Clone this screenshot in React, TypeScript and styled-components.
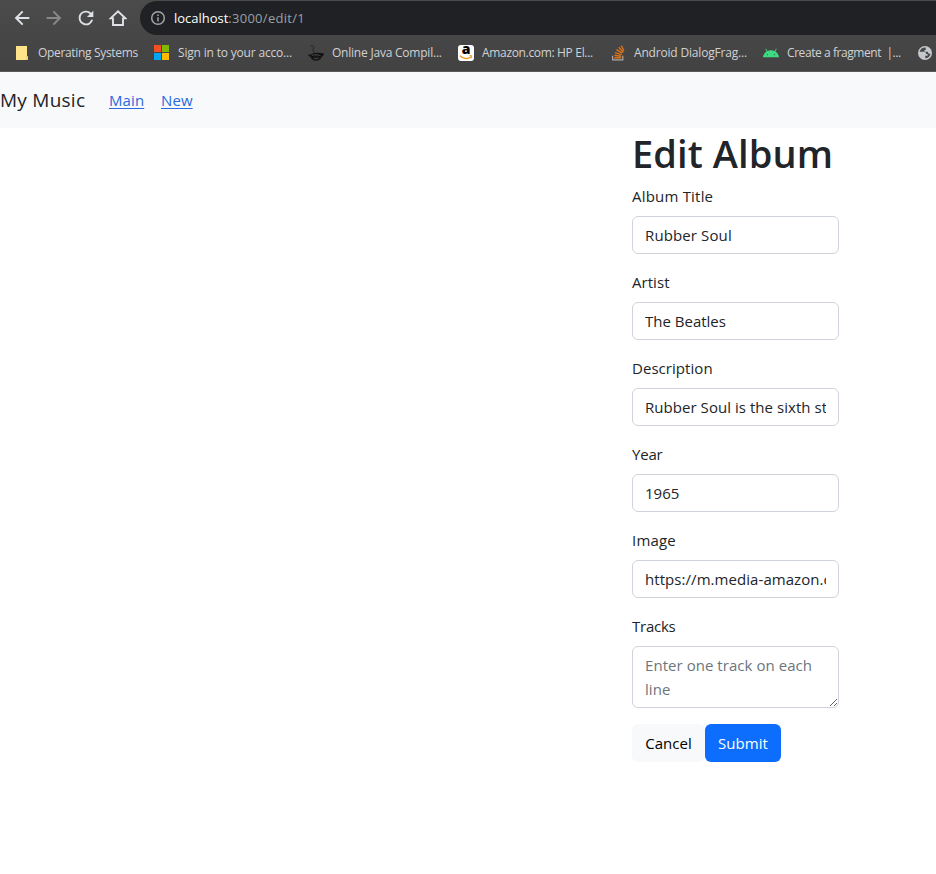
import React from "react";
import styled, { createGlobalStyle } from "styled-components";

const GlobalStyle = createGlobalStyle`
  *, *::before, *::after { box-sizing: border-box; }
  html, body { height: 100%; overflow: hidden; }
  body {
    margin: 0;
    background: #fff;
    color: #212529;
    font-family: "Segoe UI", "Open Sans", "Noto Sans", sans-serif;
    font-size: 15px;
    font-weight: 400;
    line-height: 24px;
  }
`;

const Chrome = styled.header`
  height: 72px;
  padding-top: 1px;
  background: linear-gradient(#4b4b4b, #424242);
  border-bottom: 1px solid #5a5a5a;
  overflow: hidden;
`;

const Toolbar = styled.div`
  display: flex;
  align-items: center;
  height: 34px;
  padding-left: 11px;
`;

const NavIcon = styled.span<{ $dim?: boolean }>`
  display: flex;
  flex: none;
  justify-content: center;
  width: 22px;
  margin-right: 10px;
  color: ${(p) => (p.$dim ? "#87888a" : "#dee1e6")};
`;

const AddressBar = styled.div`
  display: flex;
  flex: 1;
  align-items: center;
  height: 34px;
  margin-left: 1px;
  padding-left: 10px;
  border-radius: 17px 0 0 17px;
  background: #202124;
  color: #9aa0a6;
  font-size: 13px;
`;

const Url = styled.span`
  margin-left: 8px;
  letter-spacing: 0.28px;
`;

const Host = styled.span`
  color: #fff;
  letter-spacing: -0.02px;
`;

const Bookmarks = styled.div`
  display: flex;
  align-items: center;
  height: 36px;
  padding-left: 14px;
`;

const Bookmark = styled.div<{ $width: number }>`
  display: flex;
  flex: none;
  align-items: center;
  gap: 8px;
  width: ${(p) => p.$width}px;
  color: #d0d2d5;
  font-size: 12px;
  white-space: pre;
  svg { flex: none; }
`;

const BookmarkLabel = styled.span<{ $tracking: number }>`
  letter-spacing: ${(p) => p.$tracking}px;
`;

const Navbar = styled.nav`
  display: flex;
  align-items: center;
  height: 56px;
  background: #f8f9fa;
`;

const Brand = styled.span`
  width: 109px;
  font-size: 19px;
  line-height: 30px;
  letter-spacing: 0.25px;
`;

const NavLink = styled.a`
  width: 52px;
  color: #2a6ade;
  letter-spacing: 0.1px;
  text-decoration: underline;
  text-underline-offset: 2px;
`;

const Form = styled.form`
  width: 207px;
  margin-left: 632px;
`;

const Title = styled.h1`
  margin: 0 0 6px;
  font-size: 38px;
  font-weight: 600;
  line-height: 50px;
  letter-spacing: 0.1px;
  white-space: nowrap;
`;

const Field = styled.div`
  display: flex;
  flex-direction: column;
  gap: 8px;
  margin-bottom: 16px;
`;

const Label = styled.label<{ $tracking: number }>`
  line-height: 24px;
  letter-spacing: ${(p) => p.$tracking}px;
`;

const Input = styled.input<{ $tracking: number }>`
  width: 100%;
  height: 38px;
  padding: 6px 12px;
  border: 1px solid #ced4da;
  border-radius: 6px;
  outline: none;
  background: #fff;
  color: #212529;
  font: inherit;
  letter-spacing: ${(p) => p.$tracking}px;
`;

const TextArea = styled.textarea`
  display: block;
  width: 100%;
  height: 62px;
  padding: 6px 12px;
  border: 1px solid #ced4da;
  border-radius: 6px;
  outline: none;
  font: inherit;
  letter-spacing: 0.05px;
  overflow: hidden;
  resize: vertical;
  &::placeholder { color: #6c757d; opacity: 1; }
`;

const Actions = styled.div`
  display: flex;
`;

const Button = styled.button<{ $primary?: boolean }>`
  width: ${(p) => (p.$primary ? 76 : 73)}px;
  height: 38px;
  padding: 0;
  border: 0;
  border-radius: 6px;
  background: ${(p) => (p.$primary ? "#0d6efd" : "#f8f9fa")};
  color: ${(p) => (p.$primary ? "#fff" : "#000")};
  font: inherit;
  letter-spacing: 0.05px;
`;

const BackIcon = () => (
  <svg width="22" height="22" viewBox="0 0 24 24" fill="currentColor">
    <path d="M20 10.8H8.2l5.3-5.3L12 4l-8 8 8 8 1.5-1.5-5.3-5.3H20z" />
  </svg>
);

const ForwardIcon = () => (
  <svg width="22" height="22" viewBox="0 0 24 24" fill="currentColor">
    <path d="M4 10.8h11.8l-5.3-5.3L12 4l8 8-8 8-1.5-1.5 5.3-5.3H4z" />
  </svg>
);

const ReloadIcon = () => (
  <svg width="22" height="22" viewBox="0 0 24 24" fill="currentColor">
    <path d="M17.65 6.35A7.96 7.96 0 0 0 12 4a8 8 0 1 0 7.73 10h-2.2A5.9 5.9 0 1 1 12 6.1c1.6 0 3.1.7 4.1 1.8L13 11h7V4z" />
  </svg>
);

const HomeIcon = () => (
  <svg width="18" height="18" viewBox="0 0 18 18" fill="none" stroke="currentColor" strokeWidth="1.9">
    <path d="M1.6 9.4 9 2.4l7.4 7H14V16H4V9.4z" />
  </svg>
);

const InfoIcon = () => (
  <svg width="16" height="16" viewBox="0 0 16 16" fill="none" stroke="#a0a4a9" strokeWidth="1.5">
    <circle cx="8" cy="8" r="6.3" />
    <path d="M8 7.2v4.2M8 4.4v1.6" />
  </svg>
);

const FolderIcon = () => (
  <svg width="16" height="16" viewBox="0 0 16 16">
    <path fill="#ffe38b" d="M2 1h11v10.5h1V15H2z" />
    <path fill="#e9c85d" d="M12 11h2v4h-2z" />
    <path fill="#ffe9a2" d="M12.5 12h1v2h-1z" />
  </svg>
);

const MicrosoftIcon = () => (
  <svg width="16" height="16" viewBox="0 0 16 16">
    <path fill="#f25022" d="M0 0h7v7H0z" />
    <path fill="#7fba00" d="M8 0h7v7H8z" />
    <path fill="#00a4ef" d="M0 8h7v7H0z" />
    <path fill="#ffb900" d="M8 8h7v7H8z" />
  </svg>
);

const JavaCupIcon = () => (
  <svg width="16" height="16" viewBox="0 0 16 16">
    <path fill="none" stroke="#222" strokeWidth="1" d="M2.500.7c3.200.2 4 1.200 2.800 3-.7 1-.2 2.500 1.200 4" />
    <path fill="#111" d="M0 9.600c1.500.3 2.500.1 4-.9 3-1.400 7-1.300 12-.2-.4 1.800-1.200 2.800-2.200 3.300-1 2.700-3 3.900-5.800 3.900-2.600 0-4.600-1.300-5.500-3.700C1.200 11.700.5 10.900 0 9.600z" />
    <path fill="none" stroke="#555" strokeWidth=".8" d="M3.500 10.800c2.500-1.500 6.500-1.500 9 0M5.500 13.200c1.500.9 4 .9 5.500-.3" />
    <circle cx="8.200" cy="11.500" r="1.100" fill="#000" stroke="#4f4f4f" strokeWidth=".5" />
  </svg>
);

const AmazonTile = styled.span`
  display: flex;
  flex: none;
  flex-direction: column;
  align-items: center;
  width: 16px;
  height: 16px;
  border-radius: 3px;
  background: #fff;
  color: #000;
  font-size: 14px;
  font-weight: 800;
  line-height: 8px;
`;

const AmazonLetter = styled.span`
  height: 10px;
`;

const AmazonIcon = () => (
  <AmazonTile>
    <AmazonLetter>a</AmazonLetter>
    <svg width="14" height="5" viewBox="0 0 14 5" fill="none" stroke="#f79a1c">
      <path strokeWidth="1.300" d="M1 .8c3 3.300 8 3.600 11 1" />
      <path strokeWidth="1" d="M10.300.7h2.500l-.5 2.600" />
    </svg>
  </AmazonTile>
);

const StackIcon = () => (
  <svg width="16" height="16" viewBox="0 0 16 16" fill="none">
    <path stroke="#aaa9a8" strokeWidth="1.200" d="M2.600 10.800v4h10.200v-4" />
    <path stroke="#d9741c" strokeWidth="1.400" d="M4.300 12.700h6.900M4.400 10.300l6.800.9M5 7.600l6.500 2M6.400 4.600l5.900 3.600M8.800 2.300l4.500 5M11.300.6l2.600 5.200" />
  </svg>
);

const AndroidIcon = () => (
  <svg width="16" height="16" viewBox="0 0 16 16">
    <path fill="#3ddc84" d="M0 12.300c.2-2.600 1.600-4.700 3.700-5.900L2.300 4l.6-.4 1.500 2.500a9 9 0 0 1 7.200 0l1.500-2.500.6.4-1.400 2.400c2.100 1.200 3.500 3.300 3.700 5.900z" />
    <circle cx="4.400" cy="9.600" r=".7" fill="#356b4c" />
    <circle cx="11.600" cy="9.600" r=".7" fill="#356b4c" />
  </svg>
);

const GlobeIcon = () => (
  <svg width="16" height="16" viewBox="0 0 16 16">
    <circle cx="8" cy="8" r="7" fill="#c4c7cb" />
    <path fill="#47484a" d="M8.700 2.500c-3.200-.1-5.500 1.500-6 4.200h4.200c1.500 0 2.200.8 2.200 2.200h1.500v1.800H8.300v2.600c2.700-.2 4.800-2 5.200-4.600h-1.700l-1.200-1.900H7.500V5h1.200z" />
  </svg>
);

const bookmarks = [
  { label: "Operating Systems", icon: <FolderIcon />, width: 140, tracking: -0.33 },
  { label: "Sign in to your acco...", icon: <MicrosoftIcon />, width: 154, tracking: -0.18 },
  { label: "Online Java Compil...", icon: <JavaCupIcon />, width: 150, tracking: -0.22 },
  { label: "Amazon.com: HP El...", icon: <AmazonIcon />, width: 152, tracking: -0.33 },
  { label: "Android DialogFrag...", icon: <StackIcon />, width: 153, tracking: -0.18 },
  { label: "Create a fragment  |...", icon: <AndroidIcon />, width: 154, tracking: -0.43 },
  { label: "", icon: <GlobeIcon />, width: 19, tracking: 0 },
];

const fields = [
  { id: "title", label: "Album Title", value: "Rubber Soul", labelTracking: 0.2, tracking: 0.12 },
  { id: "artist", label: "Artist", value: "The Beatles", labelTracking: 0.05, tracking: 0 },
  { id: "description", label: "Description", value: "Rubber Soul is the sixth studio album", labelTracking: 0.05, tracking: 0.05 },
  { id: "year", label: "Year", value: "1965", labelTracking: -0.2, tracking: 0 },
  { id: "image", label: "Image", value: "https://m.media-amazon.com/images", labelTracking: 0.2, tracking: 0.06 },
];

export default function App() {
  return (
    <>
      <GlobalStyle />
      <Chrome>
        <Toolbar>
          <NavIcon><BackIcon /></NavIcon>
          <NavIcon $dim><ForwardIcon /></NavIcon>
          <NavIcon><ReloadIcon /></NavIcon>
          <NavIcon><HomeIcon /></NavIcon>
          <AddressBar>
            <InfoIcon />
            <Url><Host>localhost</Host>:3000/edit/1</Url>
          </AddressBar>
        </Toolbar>
        <Bookmarks>
          {bookmarks.map((b) => (
            <Bookmark key={b.label} $width={b.width}>
              {b.icon}
              <BookmarkLabel $tracking={b.tracking}>{b.label}</BookmarkLabel>
            </Bookmark>
          ))}
        </Bookmarks>
      </Chrome>
      <Navbar>
        <Brand>My Music</Brand>
        <NavLink>Main</NavLink>
        <NavLink>New</NavLink>
      </Navbar>
      <Form>
        <Title>Edit Album</Title>
        {fields.map((f) => (
          <Field key={f.id}>
            <Label htmlFor={f.id} $tracking={f.labelTracking}>{f.label}</Label>
            <Input id={f.id} defaultValue={f.value} $tracking={f.tracking} />
          </Field>
        ))}
        <Field>
          <Label htmlFor="tracks" $tracking={-0.25}>Tracks</Label>
          <TextArea id="tracks" placeholder="Enter one track on each line" />
        </Field>
        <Actions>
          <Button type="button">Cancel</Button>
          <Button type="button" $primary>Submit</Button>
        </Actions>
      </Form>
    </>
  );
}
